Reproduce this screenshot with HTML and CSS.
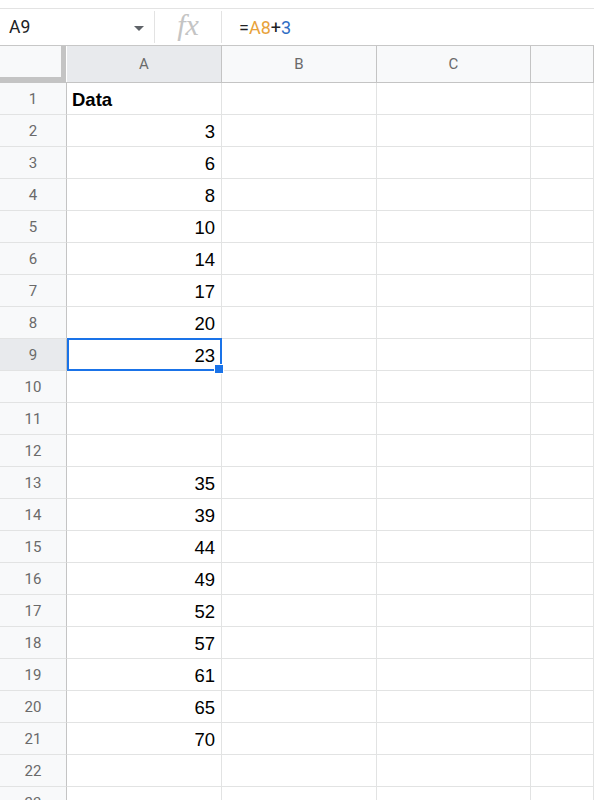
FILE: index.html
```html
<!doctype html>
<html>
	<head>
		<link rel="stylesheet" href="styles.css">
	</head>
	<body>
		<div class="topline"></div>

		<div class="formula-bar">
			<div class="name-box">
				<span class="name-ref">A9</span>
				<span class="name-caret"></span>
			</div>
			<div class="fx-box"><span class="fx">fx</span></div>
			<div class="formula"><span>=</span><span class="ref-a">A8</span><span>+</span><span class="num">3</span></div>
		</div>

		<div class="sheet">
			<div class="row head">
				<div class="corner"></div>
				<div class="col-head active">A</div>
				<div class="col-head">B</div>
				<div class="col-head">C</div>
				<div class="col-head"></div>
			</div>

			<div class="row"><div class="rh">1</div><div class="cell bold left">Data</div><div class="cell"></div><div class="cell"></div><div class="cell"></div></div>
			<div class="row"><div class="rh">2</div><div class="cell">3</div><div class="cell"></div><div class="cell"></div><div class="cell"></div></div>
			<div class="row"><div class="rh">3</div><div class="cell">6</div><div class="cell"></div><div class="cell"></div><div class="cell"></div></div>
			<div class="row"><div class="rh">4</div><div class="cell">8</div><div class="cell"></div><div class="cell"></div><div class="cell"></div></div>
			<div class="row"><div class="rh">5</div><div class="cell">10</div><div class="cell"></div><div class="cell"></div><div class="cell"></div></div>
			<div class="row"><div class="rh">6</div><div class="cell">14</div><div class="cell"></div><div class="cell"></div><div class="cell"></div></div>
			<div class="row"><div class="rh">7</div><div class="cell">17</div><div class="cell"></div><div class="cell"></div><div class="cell"></div></div>
			<div class="row"><div class="rh">8</div><div class="cell">20</div><div class="cell"></div><div class="cell"></div><div class="cell"></div></div>
			<div class="row"><div class="rh active">9</div><div class="cell selected">23<span class="handle"></span></div><div class="cell"></div><div class="cell"></div><div class="cell"></div></div>
			<div class="row"><div class="rh">10</div><div class="cell"></div><div class="cell"></div><div class="cell"></div><div class="cell"></div></div>
			<div class="row"><div class="rh">11</div><div class="cell"></div><div class="cell"></div><div class="cell"></div><div class="cell"></div></div>
			<div class="row"><div class="rh">12</div><div class="cell"></div><div class="cell"></div><div class="cell"></div><div class="cell"></div></div>
			<div class="row"><div class="rh">13</div><div class="cell">35</div><div class="cell"></div><div class="cell"></div><div class="cell"></div></div>
			<div class="row"><div class="rh">14</div><div class="cell">39</div><div class="cell"></div><div class="cell"></div><div class="cell"></div></div>
			<div class="row"><div class="rh">15</div><div class="cell">44</div><div class="cell"></div><div class="cell"></div><div class="cell"></div></div>
			<div class="row"><div class="rh">16</div><div class="cell">49</div><div class="cell"></div><div class="cell"></div><div class="cell"></div></div>
			<div class="row"><div class="rh">17</div><div class="cell">52</div><div class="cell"></div><div class="cell"></div><div class="cell"></div></div>
			<div class="row"><div class="rh">18</div><div class="cell">57</div><div class="cell"></div><div class="cell"></div><div class="cell"></div></div>
			<div class="row"><div class="rh">19</div><div class="cell">61</div><div class="cell"></div><div class="cell"></div><div class="cell"></div></div>
			<div class="row"><div class="rh">20</div><div class="cell">65</div><div class="cell"></div><div class="cell"></div><div class="cell"></div></div>
			<div class="row"><div class="rh">21</div><div class="cell">70</div><div class="cell"></div><div class="cell"></div><div class="cell"></div></div>
			<div class="row"><div class="rh">22</div><div class="cell"></div><div class="cell"></div><div class="cell"></div><div class="cell"></div></div>
			<div class="row"><div class="rh">23</div><div class="cell"></div><div class="cell"></div><div class="cell"></div><div class="cell"></div></div>
		</div>
	</body>
</html>
```

FILE: styles.css
```css
html, body {
	margin: 0;
	height: 800px;
	overflow: hidden;
	background: #fff;
}

body {
	font-family: Roboto, "Liberation Sans", Arial, sans-serif;
	color: #202124;
}

.topline {
	height: 8px;
	border-bottom: 1px solid #e3e3e3;
}

/* name box + fx + formula input */
.formula-bar {
	display: flex;
	height: 36px;
	border-bottom: 1px solid #c7c7c7;
	align-items: stretch;
}

.name-box {
	width: 155px;
	box-sizing: border-box;
	display: flex;
	align-items: center;
	justify-content: space-between;
	padding: 0 10px 0 9px;
	border-right: 1px solid #e3e3e3;
	margin: 2px 0;
}
	.name-ref {
		font-size: 17.5px;
		color: #202124;
	}
	.name-caret {
		width: 0;
		height: 0;
		border-left: 5px solid transparent;
		border-right: 5px solid transparent;
		border-top: 5px solid #5f6368;
		margin-top: 2px;
	}

.fx-box {
	width: 67px;
	box-sizing: border-box;
	border-right: 1px solid #e3e3e3;
	margin: 2px 0;
	display: flex;
	align-items: center;
	justify-content: center;
}
	.fx {
		font-family: "Liberation Serif", "DejaVu Serif", serif;
		font-style: italic;
		font-size: 30px;
		color: #c4c4c4;
		margin-top: -4px;
	}

.formula {
	padding-left: 17px;
	display: flex;
	align-items: center;
	font-size: 18px;
	color: #202124;
}
	.formula .ref-a {
		color: #e8a23a;
	}
	.formula .num {
		color: #2f6dc4;
	}

/* grid */
.row {
	display: grid;
	grid-template-columns: 67px 155px 155px 154px 1fr;
	height: 32px;
}

.row.head {
	height: 36px;
	border-bottom: 1px solid #c4c4c4;
}

.corner {
	background: #f8f9fa;
	border-right: 5px solid #c4c4c4;
	border-bottom: 6px solid #c4c4c4;
	margin-right: 1px;
	margin-bottom: -1px;
}

.col-head {
	background: #f8f9fa;
	border-right: 1px solid #c4c4c4;
	display: flex;
	align-items: center;
	justify-content: center;
	font-size: 15px;
	color: #6a6a6a;
}
	.col-head.active {
		background: #e8eaed;
	}

.rh {
	background: #f8f9fa;
	border-right: 1px solid #c4c4c4;
	border-bottom: 1px solid #e2e3e3;
	display: flex;
	align-items: center;
	justify-content: center;
	font-size: 15px;
	color: #6a6a6a;
	padding-top: 1px;
}
	.rh.active {
		background: #e8eaed;
	}

.cell {
	border-right: 1px solid #e2e3e3;
	border-bottom: 1px solid #e2e3e3;
	display: flex;
	align-items: center;
	justify-content: flex-end;
	padding: 2px 6px 0 5px;
	font-family: "Liberation Sans", Arial, sans-serif;
	font-size: 18.5px;
	color: #000;
	position: relative;
}
	.cell.left {
		justify-content: flex-start;
	}
	.cell.bold {
		font-weight: bold;
	}

/* active cell outline and fill handle */
.cell.selected::after {
	content: "";
	position: absolute;
	left: 0;
	top: -1px;
	right: -1px;
	bottom: -1px;
	border: 2px solid #1a73e8;
}
.handle {
	position: absolute;
	right: -3px;
	bottom: -4px;
	width: 8px;
	height: 8px;
	background: #1a73e8;
	border: 1px solid #fff;
	z-index: 1;
}
```
